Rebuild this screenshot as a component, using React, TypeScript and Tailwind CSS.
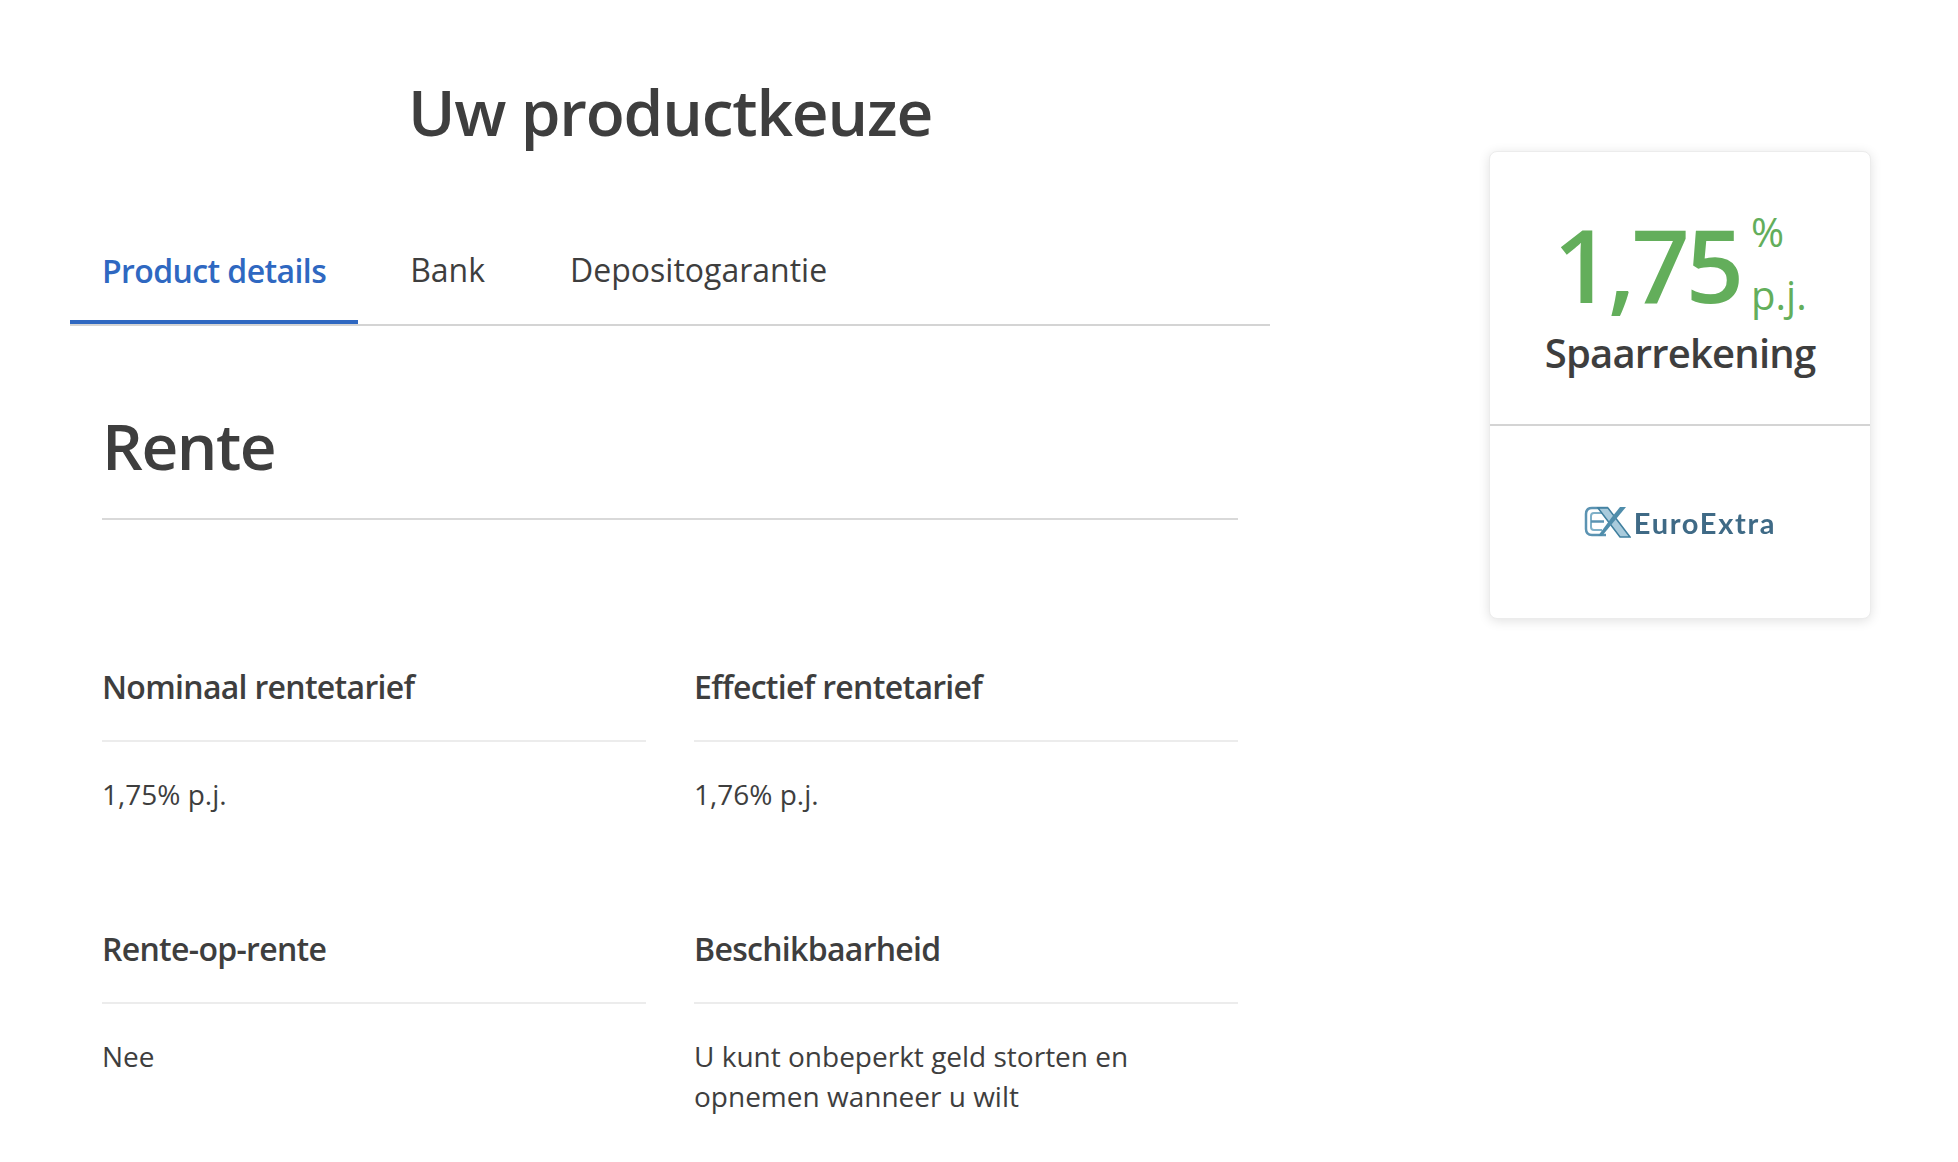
const DETAILS = [
  { label: "Nominaal rentetarief", value: "1,75% p.j." },
  { label: "Effectief rentetarief", value: "1,76% p.j." },
  { label: "Rente-op-rente", value: "Nee" },
  { label: "Beschikbaarheid", value: "U kunt onbeperkt geld storten en opnemen wanneer u wilt" },
];

function Logo() {
  return (
    <div className="flex items-center justify-center gap-[3px] blur-[0.5px]">
      <svg width="47" height="32" viewBox="0 0 47 32" fill="none">
        {/* E outline */}
        <path d="M24 2H8Q2 2 2 8V23Q2 29 8 29H22" stroke="#5b93b2" strokeWidth="2.5" />
        <path d="M22 7H10Q7 7 7 10V21Q7 24 10 24H18" stroke="#7fb0c8" strokeWidth="2" />
        <path d="M7 15.5H20" stroke="#5b93b2" strokeWidth="2.5" />
        {/* X */}
        <path d="M14 2L36 31H46L24 2Z" fill="#a9cbdc" stroke="#3f7f9e" strokeWidth="1.5" />
        <path d="M18 30L42 1H36L28 11L14 30Z" fill="#4f8dab" />
      </svg>
      <span className="font-['Lato',sans-serif] text-[29px] leading-none font-bold text-[#3f6a86] tracking-[1.7px]">EuroExtra</span>
    </div>
  );
}

export default function App() {
  return (
    <div className="font-['Open_Sans',sans-serif] min-h-screen bg-white flex items-start text-[#3e3e3e] overflow-hidden">
      <main className="ml-[70px] w-[1200px] shrink-0">
        <h1 className="mt-[67px] text-center text-[64px] leading-[90px] font-semibold tracking-[-1.2px]">Uw productkeuze</h1>

        {/* Tabs */}
        <div className="mt-[5px] flex h-[164px] items-end border-b-2 border-[#d4d4d4]">
          <div className="px-[32px] pb-[27px] border-b-4 border-[#2f68c1] text-[#2f68c1] text-[32px] leading-[44px] font-semibold tracking-[-0.6px]">
            Product details
          </div>
          <div className="ml-[20px] px-[32px] pb-[32px] text-[32px] leading-[44px]">Bank</div>
          <div className="ml-[21px] px-[32px] pb-[32px] text-[32px] leading-[44px]">Depositogarantie</div>
        </div>

        <div className="px-[32px]">
          <h2 className="pt-[76px] pb-[28px] border-b-2 border-[#d9d9d9] text-[64px] leading-[88px] font-semibold tracking-[-1.5px]">Rente</h2>

          <div className="mt-[145px] grid grid-cols-2 gap-x-[48px] gap-y-[73px]">
            {DETAILS.map((d) => (
              <div key={d.label}>
                <h3 className="pb-[31px] border-b-2 border-[#ececec] text-[32px] leading-[44px] font-semibold tracking-[-0.7px]">{d.label}</h3>
                <p className="mt-[32px] text-[28px] leading-[40px] min-h-[80px]">{d.value}</p>
              </div>
            ))}
          </div>
        </div>
      </main>

      {/* Rate card */}
      <aside className="ml-[219px] mt-[151px] w-[382px] h-[468px] shrink-0 rounded-[8px] bg-white border border-[#ececec] shadow-[0_2px_12px_rgba(0,0,0,0.12)] flex flex-col">
        <div className="h-[274px] border-b-2 border-[#d4d4d4] flex flex-col items-center">
          <div className="mt-[62px] flex items-start text-[#63ae5b] h-[100px]">
            <span className="text-[102px] leading-[100px] font-semibold tracking-[-4px]">1,75</span>
            <span className="ml-[11px] -mt-[4px] flex flex-col">
              <span className="text-[40px] leading-[44px]">%</span>
              <span className="mt-[15px] text-[40px] leading-[52px]">p.j.</span>
            </span>
          </div>
          <p className="mt-[12px] text-[40px] leading-[54px] font-semibold tracking-[-0.8px]">Spaarrekening</p>
        </div>
        <div className="flex-1 flex items-center justify-center">
          <Logo />
        </div>
      </aside>
    </div>
  );
}
